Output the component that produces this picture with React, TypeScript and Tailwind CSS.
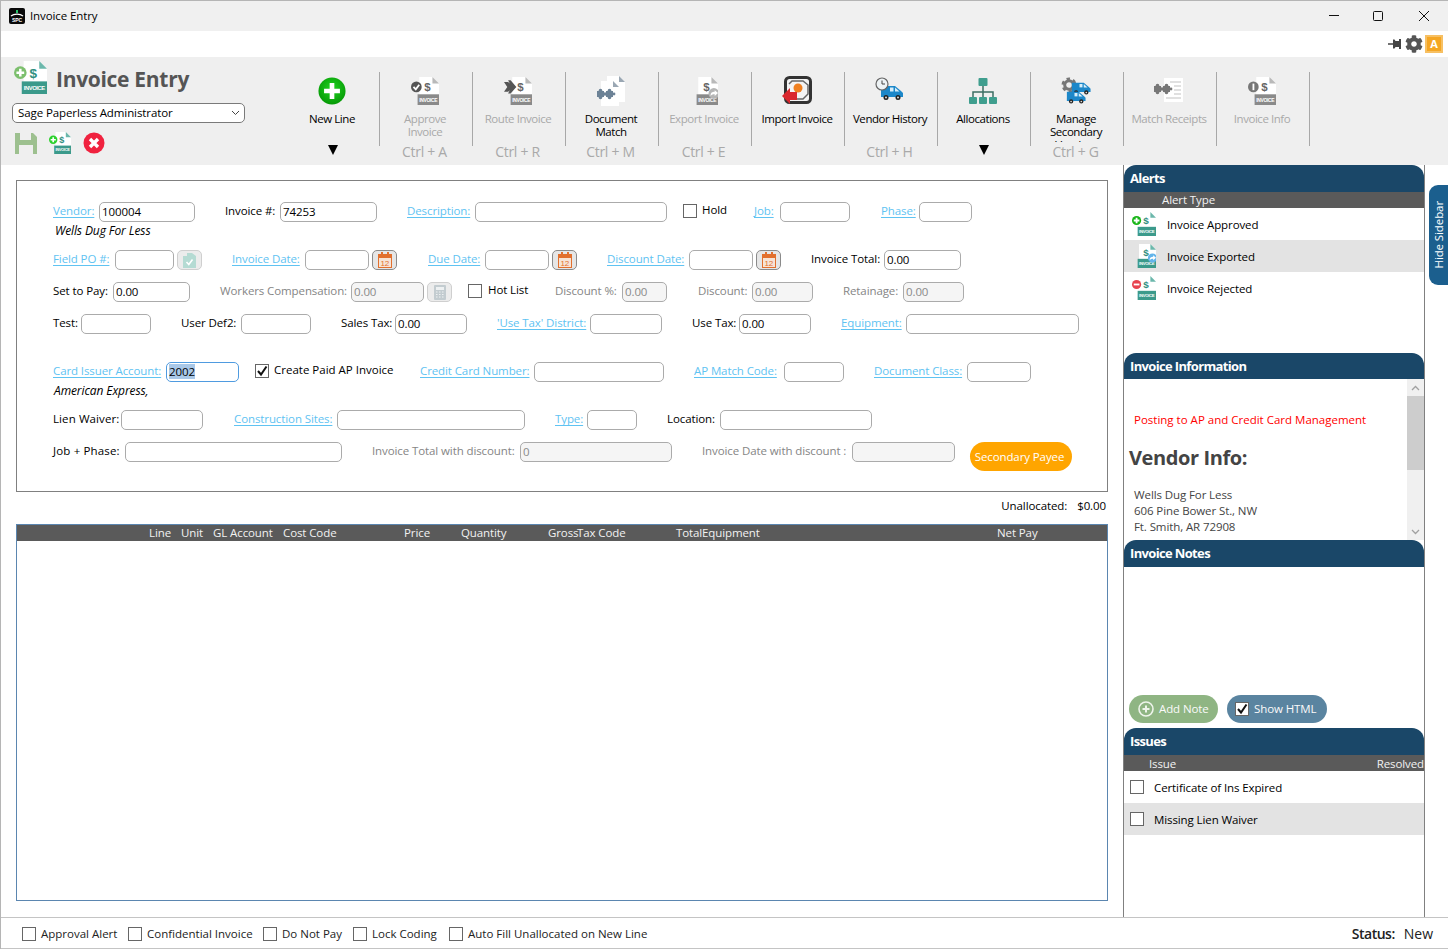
import React from 'react';
import clsx from 'clsx';
import { FaCog } from 'react-icons/fa';

type Badge = 'plus' | 'check' | 'route' | 'export' | 'minus' | 'info' | 'none';

const Puzzle: React.FC<{ x: number; y: number; color: string }> = ({ x, y, color }) => (
  <g transform={`translate(${x} ${y})`} fill={color}>
    <rect x="0" y="3" width="7" height="6" />
    <circle cx="3.5" cy="2.5" r="1.8" />
    <circle cx="3.5" cy="9.5" r="1.8" />
    <rect x="9" y="3" width="7" height="6" />
    <circle cx="12.5" cy="2.5" r="1.8" />
    <circle cx="12.5" cy="9.5" r="1.8" />
    <circle cx="8" cy="6" r="1.8" />
    <circle cx="17" cy="6" r="1.4" />
  </g>
);

const DocIcon: React.FC<{ size: number; strip: string; fold: string; badge: Badge; badgeColor?: string; ink?: string }> = ({
  size,
  strip,
  fold,
  badge,
  badgeColor = '#555',
  ink = '#444',
}) => (
  <svg width={size} height={size} viewBox="0 0 34 34" className="shrink-0">
    <path d="M10 0H26L34 8V34H10Z" fill="#fff" />
    <path d="M26 0L34 8H26Z" fill={fold} />
    <text x="16" y="17" fontSize="14" fontWeight="700" fontFamily="Liberation Sans" fill={ink}>$</text>
    <rect x="8" y="21" width="26" height="13" fill={strip} />
    <text x="10" y="30" fontSize="6" fontWeight="700" fontFamily="Liberation Sans" fill="#fff" textLength="22">INVOICE</text>
    {(badge === 'plus' || badge === 'check' || badge === 'minus' || badge === 'info') && (
      <circle cx="6.5" cy="12" r="6.5" fill={badgeColor} />
    )}
    {badge === 'plus' && <path d="M6.5 8V16M2.5 12H10.5" stroke="#fff" strokeWidth="2.6" />}
    {badge === 'minus' && <path d="M2.5 12H10.5" stroke="#fff" strokeWidth="2.6" />}
    {badge === 'check' && <path d="M3 12L5.8 15L10 9.5" stroke="#fff" strokeWidth="2.2" fill="none" />}
    {badge === 'info' && <rect x="5.5" y="8" width="2.2" height="8" fill="#fff" />}
    {badge === 'route' && <path d="M0 6H5L7 8L5 4H8L15 12L8 20H5L7 16L5 18H0L4 12Z" fill={badgeColor} />}
    {badge === 'export' && (
      <>
        <circle cx="29" cy="20" r="6.5" fill={badgeColor} />
        <path d="M25 23C25 19 27 18 30 18V16L34 19.5L30 23V21C28 21 26.500 21.500 25 23Z" fill="#fff" />
      </>
    )}
  </svg>
);

const Van: React.FC<{ x: number; y: number; s?: number }> = ({ x, y, s = 1 }) => (
  <g transform={`translate(${x} ${y}) scale(${s})`}>
    <path d="M1 2H15L21 7L23 9V13H1Z" fill="#1c87c9" />
    <path d="M15 3.500L19.500 7.500H15Z" fill="#d7eefa" />
    <path d="M10 3.500H13.500V7.500H10Z" fill="#d7eefa" />
    <circle cx="6" cy="13.500" r="2.500" fill="#222" />
    <circle cx="18" cy="13.500" r="2.500" fill="#222" />
    <circle cx="6" cy="13.500" r="1" fill="#ddd" />
    <circle cx="18" cy="13.500" r="1" fill="#ddd" />
  </g>
);

const GearDraw: React.FC<{ x: number; y: number; r: number; color: string }> = ({ x, y, r, color }) => (
  <g>
    <circle cx={x} cy={y} r={r} fill="none" stroke={color} strokeWidth={r * 0.5} strokeDasharray={`${r * 0.55} ${r * 0.5}`} />
    <circle cx={x} cy={y} r={r * 0.72} fill="none" stroke={color} strokeWidth={r * 0.5} />
  </g>
);

const NewLineIcon = () => (
  <svg width="28" height="28" viewBox="0 0 30 30">
    <defs>
      <radialGradient id="nl" cx="50%" cy="40%" r="60%">
        <stop offset="0%" stopColor="#22d422" />
        <stop offset="100%" stopColor="#059905" />
      </radialGradient>
    </defs>
    <circle cx="15" cy="15" r="14.500" fill="url(#nl)" />
    <path d="M15 6.500V23.500M6.500 15H23.500" stroke="#fff" strokeWidth="5" />
  </svg>
);

const DocMatchIcon = () => (
  <svg width="30" height="30" viewBox="0 0 30 30">
    <path d="M11 0H23L29 6V26H11Z" fill="#fff" />
    <path d="M23 0L29 6H23Z" fill="#9aa7b3" />
    <path d="M5 5H17L23 11V30H5Z" fill="#fff" />
    <path d="M17 5L23 11H17Z" fill="#9aa7b3" />
    <Puzzle x={1} y={12} color="#6c8296" />
  </svg>
);

const ImportIcon = () => (
  <svg width="30" height="30" viewBox="0 0 30 30">
    <rect x="3.500" y="1.500" width="25" height="25" rx="4" fill="#f4f4f4" stroke="#333" strokeWidth="3" />
    <path d="M7 8L10 5H21L26 9V18L21 23H12" fill="none" stroke="#666" strokeWidth="1.500" />
    <circle cx="16" cy="12" r="4.500" fill="#f08020" />
    <path d="M0 20L8 12V16H15V24H8V28Z" fill="#d9272e" />
  </svg>
);

const VendorHistoryIcon = () => (
  <svg width="30" height="28" viewBox="0 0 30 28">
    <Van x={5} y={7} />
    <circle cx="7" cy="7" r="6" fill="#eef3f5" stroke="#666" strokeWidth="1.200" />
    <path d="M7 3.500V7H10" fill="none" stroke="#444" strokeWidth="1" />
  </svg>
);

const AllocationsIcon = () => (
  <svg width="30" height="28" viewBox="0 0 30 28">
    <path d="M15 8V16M5 21V15H25V21M15 15V21" fill="none" stroke="#3c6f64" strokeWidth="1.500" />
    <rect x="10.500" y="1" width="9" height="8" rx="1" fill="#3f9e8e" />
    <rect x="1" y="20" width="8" height="7" rx="1" fill="#3f9e8e" />
    <rect x="11" y="20" width="8" height="7" rx="1" fill="#3f9e8e" />
    <rect x="21" y="20" width="8" height="7" rx="1" fill="#3f9e8e" />
  </svg>
);

const ManageIcon = () => (
  <svg width="30" height="28" viewBox="0 0 30 28">
    <GearDraw x={8} y={8} r={6} color="#777" />
    <Van x={10} y={4} s={0.85} />
    <Van x={5} y={13} s={0.85} />
  </svg>
);

const ReceiptIcon = () => (
  <svg width="30" height="28" viewBox="0 0 30 28">
    <rect x="10" y="1" width="19" height="24" fill="#fff" />
    <path d="M16 5H27M20 9H27M20 13H27M20 17H27M12 21H27" stroke="#c2c2c2" strokeWidth="1.200" />
    <Puzzle x={0} y={6} color="#777" />
  </svg>
);

const Toolbar = () => {
  const tools: { label: string; ctrl?: string; icon: React.ReactNode; off?: boolean; drop?: boolean }[] = [
    { label: 'Approve Invoice', ctrl: 'Ctrl + A', off: true, icon: <DocIcon size={28} strip="#8a8a8a" fold="#b9b9b9" badge="check" ink="#666" /> },
    { label: 'Route Invoice', ctrl: 'Ctrl + R', off: true, icon: <DocIcon size={28} strip="#8a8a8a" fold="#b9b9b9" badge="route" ink="#666" /> },
    { label: 'Document Match', ctrl: 'Ctrl + M', icon: <DocMatchIcon /> },
    { label: 'Export Invoice', ctrl: 'Ctrl + E', off: true, icon: <DocIcon size={28} strip="#8a8a8a" fold="#b9b9b9" badge="export" badgeColor="#b5b5b5" ink="#666" /> },
    { label: 'Import Invoice', icon: <ImportIcon /> },
    { label: 'Vendor History', ctrl: 'Ctrl + H', icon: <VendorHistoryIcon /> },
    { label: 'Allocations', drop: true, icon: <AllocationsIcon /> },
    { label: 'Manage Secondary Vendors', ctrl: 'Ctrl + G', icon: <ManageIcon /> },
    { label: 'Match Receipts', off: true, icon: <ReceiptIcon /> },
    { label: 'Invoice Info', off: true, icon: <DocIcon size={28} strip="#8a8a8a" fold="#b9b9b9" badge="info" badgeColor="#777" ink="#666" /> },
  ];

  return (
    <div className="flex h-[108px] bg-[#efefef]">
      <div className="flex w-[286px] shrink-0 flex-col pl-[11px]">
        <div className="flex h-[46px] items-start pl-[2px] pt-[4px]">
          <DocIcon size={33} strip="#3b9a8b" fold="#6bb7ab" badge="plus" badgeColor="#7cbf6d" ink="#2f8f7f" />
          <span className="ml-[9px] mt-[7px] text-[21px] font-bold leading-[22px] tracking-[-0.3px] text-[#555]">Invoice Entry</span>
        </div>
        <div className="flex h-[20px] w-[233px] items-center justify-between rounded-[5px] border border-[#7a7a7a] bg-white pl-[5px] pr-[4px]">
          <span>Sage Paperless Administrator</span>
          <svg width="9" height="6" viewBox="0 0 9 6"><path d="M1 1L4.500 4.500L8 1" fill="none" stroke="#444" strokeWidth="1" /></svg>
        </div>
        <div className="mt-[9px] flex items-center">
          <svg width="22" height="22" viewBox="0 0 22 22" className="ml-[3px]">
            <path d="M0 1H18L22 5V22H0Z" fill="#9dc08f" />
            <rect x="5" y="1" width="11" height="7" fill="#efefef" />
            <rect x="4" y="13" width="14" height="9" fill="#efefef" />
          </svg>
          <span className="ml-[12px]"><DocIcon size={22} strip="#3b9a8b" fold="#6bb7ab" badge="plus" badgeColor="#2bd12b" ink="#2f8f7f" /></span>
          <svg width="22" height="22" viewBox="0 0 22 22" className="ml-[12px]">
            <circle cx="11" cy="11" r="10.500" fill="#f0223f" />
            <path d="M7 7L15 15M15 7L7 15" stroke="#fff" strokeWidth="3.400" />
          </svg>
        </div>
      </div>
      <ToolCell label="New Line" drop icon={<NewLineIcon />} />
      {tools.map((t) => (
        <ToolCell key={t.label} {...t} />
      ))}
    </div>
  );
};

const ToolCell: React.FC<{ label: string; ctrl?: string; icon: React.ReactNode; off?: boolean; drop?: boolean }> = ({
  label,
  ctrl,
  icon,
  off,
  drop,
}) => (
  <div className="flex w-[93px] shrink-0 flex-col pt-[15px]">
    <div className="flex h-[74px] flex-col items-center border-r border-[#a8a8a8] pr-[2px]">
      <div className="flex h-[40px] w-full items-center justify-center pb-[3px]">{icon}</div>
      <div
        className={clsx(
          'h-[30px] w-[78px] overflow-hidden text-center leading-[13px] tracking-[-0.45px]',
          off ? 'text-[#a9a9a9]' : 'text-black',
        )}
      >
        {label}
      </div>
    </div>
    {ctrl && <div className="-mt-[1px] pr-[4px] text-center text-[14px] leading-[14px] tracking-[-0.3px] text-[#a9a9a9]">{ctrl}</div>}
    {drop && (
      <div className="-mt-[1px] flex justify-center pr-[2px]">
        <svg width="10" height="10" viewBox="0 0 10 10"><path d="M0 0H10L5 10Z" fill="#000" /></svg>
      </div>
    )}
  </div>
);

const Lbl: React.FC<{ className: string; link?: boolean; off?: boolean; children: React.ReactNode }> = ({
  className,
  link,
  off,
  children,
}) => (
  <span
    className={clsx(
      'mb-[2px] mr-[4px] shrink-0 whitespace-nowrap',
      link && 'text-[#5fc3f2] underline underline-offset-2',
      off && 'text-[#858585]',
      className,
    )}
  >
    {children}
  </span>
);

const Inp: React.FC<{ className: string; value?: string; off?: boolean }> = ({ className, value = '', off }) => (
  <input
    readOnly
    value={value}
    className={clsx(
      'h-[20px] shrink-0 rounded-[5px] border border-[#ababab] pb-[2px] pl-[2px] outline-none',
      off ? 'bg-[#f5f5f5] text-[#8a8a8a]' : 'bg-white text-black',
      className,
    )}
  />
);

const Box: React.FC<{ checked?: boolean; className?: string }> = ({ checked, className }) => (
  <span className={clsx('flex h-[14px] w-[14px] shrink-0 items-center justify-center border border-[#666] bg-white', className)}>
    {checked && (
      <svg width="12" height="12" viewBox="0 0 12 12"><path d="M2 6L5 9.500L10.500 1.500" fill="none" stroke="#111" strokeWidth="2" /></svg>
    )}
  </span>
);

const CalBtn = () => (
  <span className="ml-[3px] flex h-[20px] w-[25px] shrink-0 items-center justify-center rounded-[5px] border border-[#8a8a8a] bg-[#e6e6e6]">
    <svg width="14" height="16" viewBox="0 0 14 16">
      <rect x="0.500" y="2.500" width="13" height="13" fill="#f7e4d6" stroke="#e2702e" />
      <rect x="0" y="2" width="14" height="4" fill="#e2702e" />
      <rect x="3" y="0" width="2" height="4" fill="#e2702e" />
      <rect x="9" y="0" width="2" height="4" fill="#e2702e" />
      <text x="2.500" y="14" fontSize="8" fontFamily="Liberation Sans" fill="#e2702e">12</text>
    </svg>
  </span>
);

const GhostBtn: React.FC<{ calc?: boolean }> = ({ calc }) => (
  <span className="ml-[3px] flex h-[20px] w-[25px] shrink-0 items-center justify-center rounded-[5px] border border-[#cfcfcf] bg-[#ececec]">
    {calc ? (
      <svg width="12" height="15" viewBox="0 0 12 15">
        <rect width="12" height="15" rx="1" fill="#c3ccd0" />
        <rect x="2" y="2" width="8" height="3" fill="#eef1f2" />
        <path d="M2 7H10M2 9.500H10M2 12H10" stroke="#eef1f2" strokeDasharray="1.500 1.500" />
      </svg>
    ) : (
      <svg width="13" height="15" viewBox="0 0 13 15">
        <path d="M0 3H4V0H9L13 3V15H0Z" fill="#b5dbd3" />
        <path d="M3.500 9L5.800 11.500L9.500 6.500" fill="none" stroke="#fff" strokeWidth="1.600" />
      </svg>
    )}
  </span>
);

const Row: React.FC<{ className?: string; children: React.ReactNode }> = ({ className, children }) => (
  <div className={clsx('flex h-[20px] items-center', className)}>{children}</div>
);

const InvoiceForm = () => (
  <div className="box-border h-[312px] w-[1092px] border border-[#808080] pl-[36px] pt-[21px]">
    <Row>
      <Lbl link className="w-[42px]">Vendor:</Lbl>
      <Inp className="w-[96px]" value="100004" />
      <Lbl className="ml-[30px] w-[51px]">Invoice #:</Lbl>
      <Inp className="w-[97px]" value="74253" />
      <Lbl link className="ml-[30px] w-[64px]">Description:</Lbl>
      <Inp className="w-[192px]" />
      <Box className="mb-[3px] ml-[16px]" />
      <span className="mb-[4px] ml-[5px] w-[26px]">Hold</span>
      <Lbl link className="ml-[26px] w-[22px]">Job:</Lbl>
      <Inp className="w-[70px]" />
      <Lbl link className="ml-[31px] w-[34px]">Phase:</Lbl>
      <Inp className="w-[53px]" />
    </Row>
    <div className="h-[19px] pl-[2px] text-[12px] leading-[17px] italic">Wells Dug For Less</div>

    <Row className="mt-[9px]">
      <Lbl link className="w-[58px]">Field PO #:</Lbl>
      <Inp className="w-[59px]" />
      <GhostBtn />
      <Lbl link className="ml-[30px] w-[69px]">Invoice Date:</Lbl>
      <Inp className="w-[64px]" />
      <CalBtn />
      <Lbl link className="ml-[31px] w-[53px]">Due Date:</Lbl>
      <Inp className="w-[64px]" />
      <CalBtn />
      <Lbl link className="ml-[30px] w-[78px]">Discount Date:</Lbl>
      <Inp className="w-[64px]" />
      <CalBtn />
      <Lbl className="ml-[30px] w-[69px]">Invoice Total:</Lbl>
      <Inp className="w-[77px]" value="0.00" />
    </Row>

    <Row className="mt-[12px]">
      <Lbl className="w-[56px]">Set to Pay:</Lbl>
      <Inp className="w-[77px]" value="0.00" />
      <Lbl off className="ml-[30px] w-[127px]">Workers Compensation:</Lbl>
      <Inp off className="w-[73px]" value="0.00" />
      <GhostBtn calc />
      <Box className="mb-[3px] ml-[16px]" />
      <span className="mb-[4px] ml-[6px] w-[40px] whitespace-nowrap">Hot List</span>
      <Lbl off className="ml-[27px] w-[63px]">Discount %:</Lbl>
      <Inp off className="w-[45px]" value="0.00" />
      <Lbl off className="ml-[31px] w-[50px]">Discount:</Lbl>
      <Inp off className="w-[61px]" value="0.00" />
      <Lbl off className="ml-[30px] w-[56px]">Retainage:</Lbl>
      <Inp off className="w-[61px]" value="0.00" />
    </Row>

    <Row className="mt-[12px]">
      <Lbl className="w-[24px]">Test:</Lbl>
      <Inp className="w-[70px]" />
      <Lbl className="ml-[30px] w-[56px]">User Def2:</Lbl>
      <Inp className="w-[70px]" />
      <Lbl className="ml-[30px] w-[50px]">Sales Tax:</Lbl>
      <Inp className="w-[72px]" value="0.00" />
      <Lbl link className="ml-[30px] w-[89px]">'Use Tax' District:</Lbl>
      <Inp className="w-[72px]" />
      <Lbl className="ml-[30px] w-[43px]">Use Tax:</Lbl>
      <Inp className="w-[72px]" value="0.00" />
      <Lbl link className="ml-[30px] w-[61px]">Equipment:</Lbl>
      <Inp className="w-[173px]" />
    </Row>

    <Row className="mt-[28px]">
      <Lbl link className="w-[109px]">Card Issuer Account:</Lbl>
      <div className="flex h-[20px] w-[73px] shrink-0 items-center rounded-[5px] border border-[#4f9be0] pb-[1px] pl-[2px]">
        <span className="bg-[#a9c8e8] leading-[15px]">2002</span>
      </div>
      <Box checked className="mb-[3px] ml-[16px]" />
      <span className="mb-[4px] ml-[5px] w-[119px] whitespace-nowrap tracking-normal">Create Paid AP Invoice</span>
      <Lbl link className="ml-[27px] w-[110px]">Credit Card Number:</Lbl>
      <Inp className="w-[130px]" />
      <Lbl link className="ml-[30px] w-[86px]">AP Match Code:</Lbl>
      <Inp className="w-[60px]" />
      <Lbl link className="ml-[30px] w-[89px]">Document Class:</Lbl>
      <Inp className="w-[64px]" />
    </Row>
    <div className="h-[19px] pl-[1px] text-[12px] leading-[17px] italic">American Express,</div>

    <Row className="mt-[9px]">
      <Lbl className="w-[64px] tracking-[0.1px]">Lien Waiver:</Lbl>
      <Inp className="w-[82px]" />
      <Lbl link className="ml-[31px] w-[99px]">Construction Sites:</Lbl>
      <Inp className="w-[188px]" />
      <Lbl link className="ml-[30px] w-[28px]">Type:</Lbl>
      <Inp className="w-[50px]" />
      <Lbl className="ml-[30px] w-[49px]">Location:</Lbl>
      <Inp className="w-[152px]" />
    </Row>

    <Row className="mt-[12px]">
      <Lbl className="w-[68px] tracking-[0.15px]">Job + Phase:</Lbl>
      <Inp className="w-[217px]" />
      <Lbl off className="ml-[30px] w-[144px]">Invoice Total with discount:</Lbl>
      <Inp off className="w-[152px]" value="0" />
      <Lbl off className="ml-[30px] w-[146px]">Invoice Date with discount :</Lbl>
      <Inp off className="w-[103px]" />
      <button className="ml-[15px] h-[29px] w-[102px] shrink-0 self-start whitespace-nowrap rounded-full bg-[#ffa500] pr-[3px] text-white">
        Secondary Payee
      </button>
    </Row>
  </div>
);

const LinesTable = () => (
  <div className="box-border h-[377px] w-[1092px] border border-[#5b86b0]">
    <div className="flex h-[16px] items-center whitespace-nowrap bg-[#5a5a5a] pl-[132px] text-[#f2f2f2]">
      <span className="w-[32px]">Line</span>
      <span className="w-[32px]">Unit</span>
      <span className="w-[70px]">GL Account</span>
      <span className="w-[121px]">Cost Code</span>
      <span className="w-[57px]">Price</span>
      <span className="w-[87px]">Quantity</span>
      <span className="w-[29px]">Gross</span>
      <span className="w-[99px]">Tax Code</span>
      <span className="w-[26px]">Total</span>
      <span className="w-[295px]">Equipment</span>
      <span>Net Pay</span>
    </div>
  </div>
);

const PanelHead: React.FC<{ className?: string; children: React.ReactNode }> = ({ className = 'h-[27px]', children }) => (
  <div className={clsx('flex shrink-0 items-center rounded-t-[12px] bg-[#1a4768] pl-[6px] text-[13px] font-bold tracking-[-0.65px] text-white', className)}>
    {children}
  </div>
);

const Sidebar = () => (
  <div className="flex h-full w-[302px] shrink-0 flex-col border-x border-[#808080]">
    <PanelHead>Alerts</PanelHead>
    <div className="h-[16px] overflow-hidden bg-[#5a5a5a] pl-[38px] leading-[16px] text-[#f2f2f2]">Alert Type</div>
    <div className="flex h-[32px] items-center pl-[8px]">
      <DocIcon size={24} strip="#3b9a8b" fold="#6bb7ab" badge="plus" badgeColor="#16b516" ink="#2f8f7f" />
      <span className="ml-[11px] mt-[1px]">Invoice Approved</span>
    </div>
    <div className="flex h-[32px] items-center bg-[#e3e3e3] pl-[8px]">
      <DocIcon size={24} strip="#3b9a8b" fold="#6bb7ab" badge="export" badgeColor="#63b4ea" ink="#2f8f7f" />
      <span className="ml-[11px] mt-[1px]">Invoice Exported</span>
    </div>
    <div className="flex h-[32px] items-center pl-[8px]">
      <DocIcon size={24} strip="#3b9a8b" fold="#6bb7ab" badge="minus" badgeColor="#e8434f" ink="#2f8f7f" />
      <span className="ml-[11px] mt-[1px]">Invoice Rejected</span>
    </div>
    <div className="h-[49px]" />

    <PanelHead className="h-[26px] pt-[1px]">Invoice Information</PanelHead>
    <div className="flex h-[161px] shrink-0">
      <div className="min-w-0 flex-1 overflow-hidden text-[#444]">
        <p className="ml-[10px] mt-[32px] tracking-normal text-[#ff0000]">Posting to AP and Credit Card Management</p>
        <p className="ml-[5px] mt-[16px] text-[20px] font-bold leading-[28px] tracking-[-0.4px]">Vendor Info:</p>
        <p className="ml-[10px] mt-[15px] leading-[16px]">
          Wells Dug For Less
          <br />
          606 Pine Bower St., NW
          <br />
          Ft. Smith, AR 72908
        </p>
      </div>
      <div className="flex w-[17px] shrink-0 flex-col bg-[#f0f0f0]">
        <div className="flex h-[17px] items-center justify-center">
          <svg width="9" height="6" viewBox="0 0 9 6"><path d="M1 5L4.500 1.500L8 5" fill="none" stroke="#a0a0a0" strokeWidth="1.300" /></svg>
        </div>
        <div className="h-[74px] bg-[#cdcdcd]" />
        <div className="flex-1" />
        <div className="flex h-[17px] items-center justify-center">
          <svg width="9" height="6" viewBox="0 0 9 6"><path d="M1 1L4.500 4.500L8 1" fill="none" stroke="#a0a0a0" strokeWidth="1.300" /></svg>
        </div>
      </div>
    </div>

    <PanelHead>Invoice Notes</PanelHead>
    <div className="flex h-[161px] shrink-0 items-end pb-[5px] pl-[5px]">
      <button className="flex h-[28px] w-[89px] items-center rounded-full bg-[#8fb583] pl-[9px] text-[#fafafa]">
        <svg width="16" height="16" viewBox="0 0 16 16">
          <circle cx="8" cy="8" r="7" fill="none" stroke="#eef4eb" strokeWidth="1.600" />
          <path d="M8 4.500V11.500M4.500 8H11.500" stroke="#eef4eb" strokeWidth="2" />
        </svg>
        <span className="ml-[5px]">Add Note</span>
      </button>
      <div className="ml-[9px] flex h-[28px] w-[100px] items-center rounded-full bg-[#5a84a0] pl-[8px] text-[#fafafa]">
        <Box checked />
        <span className="ml-[5px]">Show HTML</span>
      </div>
    </div>

    <PanelHead>Issues</PanelHead>
    <div className="flex h-[16px] justify-between overflow-hidden bg-[#5a5a5a] pl-[25px] leading-[17px] text-[#f2f2f2]">
      <span>Issue</span>
      <span>Resolved</span>
    </div>
    <div className="flex h-[32px] items-center pl-[6px]">
      <Box />
      <span className="ml-[10px] mt-[1px]">Certificate of Ins Expired</span>
    </div>
    <div className="flex h-[32px] items-center bg-[#e3e3e3] pl-[6px]">
      <Box />
      <span className="ml-[10px] mt-[1px]">Missing Lien Waiver</span>
    </div>
  </div>
);

const Footer = () => (
  <div className="flex h-[32px] shrink-0 items-center border-y border-y-[#c4c4c4] pl-[21px] pt-[1px] tracking-normal text-[#222]">
    <Box />
    <span className="ml-[5px] w-[76px] whitespace-nowrap">Approval Alert</span>
    <Box className="ml-[11px]" />
    <span className="ml-[5px] w-[105px] whitespace-nowrap">Confidential Invoice</span>
    <Box className="ml-[11px]" />
    <span className="ml-[5px] w-[61px] whitespace-nowrap">Do Not Pay</span>
    <Box className="ml-[10px]" />
    <span className="ml-[5px] w-[66px] whitespace-nowrap">Lock Coding</span>
    <Box className="ml-[11px]" />
    <span className="ml-[5px] whitespace-nowrap">Auto Fill Unallocated on New Line</span>
    <span className="ml-auto text-[14px] font-semibold tracking-[-0.5px] text-[#222]">Status:</span>
    <span className="ml-[9px] mr-[15px] text-[14px]">New</span>
  </div>
);

const App: React.FC = () => (
  <div className="flex h-[949px] w-[1448px] flex-col overflow-hidden border-l border-[#b5b5b5] bg-white font-['Open_Sans',sans-serif] text-[11.5px] tracking-[-0.1px] text-black">
    <div className="flex h-[31px] shrink-0 items-center border-t border-[#b5b5b5] bg-[#f0f0f0] pl-[8px]">
      <svg width="16" height="16" viewBox="0 0 16 16">
        <rect width="16" height="16" rx="2" fill="#0a0a0a" />
        <path d="M2 8C5 5.500 11 5.500 14 8" fill="none" stroke="#fff" strokeWidth="1.300" />
        <rect x="7" y="2" width="2" height="3" fill="#27c46b" />
        <text x="3" y="14" fontSize="5" fontWeight="700" fontFamily="Liberation Sans" fill="#fff">SPC</text>
      </svg>
      <span className="ml-[5px]">Invoice Entry</span>
      <div className="ml-auto flex items-center">
        <svg width="10" height="2" viewBox="0 0 10 2" className="mr-[34px]"><rect width="10" height="1" fill="#111" /></svg>
        <svg width="10" height="10" viewBox="0 0 10 10" className="mr-[36px]"><rect x="0.500" y="0.500" width="9" height="9" rx="1" fill="none" stroke="#111" /></svg>
        <svg width="10" height="10" viewBox="0 0 10 10" className="mr-[19px]"><path d="M0 0L10 10M10 0L0 10" stroke="#111" /></svg>
      </div>
    </div>

    <div className="flex h-[26px] shrink-0 items-center justify-end bg-white pr-[5px]">
      <svg width="13" height="10" viewBox="0 0 13 10">
        <path d="M0 4.300H5V0.500H6.500L7.500 2H11V0H13V10H11V8H7.500L6.500 9.500H5V5.700H0Z" fill="#444" />
      </svg>
      <FaCog size={18} color="#555" className="ml-[4px]" />
      <div className="ml-[2px] flex h-[18px] w-[18px] items-center justify-center border-2 border-[#f7c063] bg-[#f5a623] text-[11px] font-bold text-white">A</div>
    </div>

    <Toolbar />

    <div className="flex min-h-0 flex-1">
      <div className="w-[1122px] shrink-0 pl-[15px] pt-[15px]">
        <InvoiceForm />
        <div className="flex h-[32px] w-[1090px] items-center justify-end pb-[4px] text-black">
          <span>Unallocated:</span>
          <span className="ml-[10px]">$0.00</span>
        </div>
        <LinesTable />
      </div>
      <Sidebar />
      <div className="pl-[4px] pt-[20px]">
        <div className="flex h-[100px] w-[19px] items-center justify-center rounded-l-[9px] bg-[#1b5f8e] text-white">
          <span className="rotate-180 whitespace-nowrap [writing-mode:vertical-rl]">Hide Sidebar</span>
        </div>
      </div>
    </div>

    <Footer />
  </div>
);

export default App;
